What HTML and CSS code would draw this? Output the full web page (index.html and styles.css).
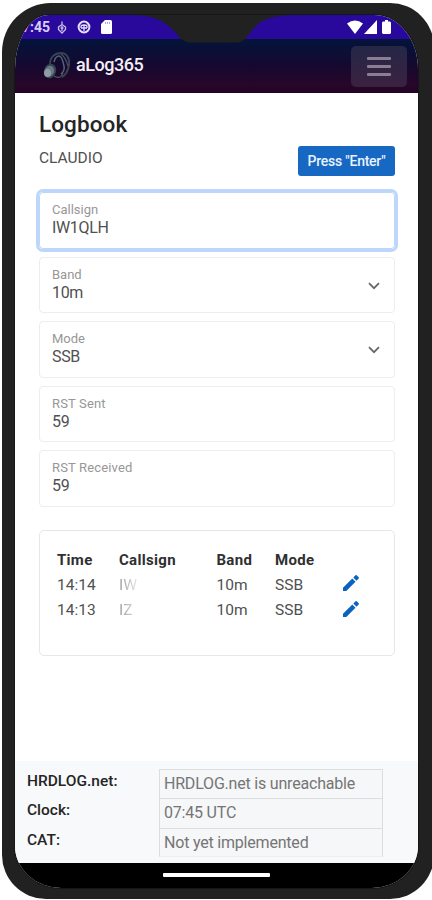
FILE: index.html
```html
<!DOCTYPE html>
<html lang="en">
<head>
<meta charset="utf-8">
<title>aLog365</title>
<link rel="stylesheet" href="styles.css">
</head>
<body>
<div class="phone">
  <div class="screen">
    <div class="status">
      <span class="time">7:45</span>
      <svg class="st-bug" width="10" height="13" viewBox="0 0 10 13"><path d="M5 .5v3M1.500 6L5 3.500 8.500 6v2.500L5 12 1.500 8.500zM3.500 7h3M5 5v5" fill="none" stroke="#c9c0f0" stroke-width="1.300"/></svg>
      <svg class="st-circle" width="14" height="14" viewBox="0 0 14 14"><circle cx="7" cy="7" r="5.400" fill="none" stroke="#e6e0fa" stroke-width="2"/><path d="M4 8V6.500q0-1.500 3-1.500t3 1.500V8M7 5.500V11M4 8h6" fill="none" stroke="#e6e0fa" stroke-width="1.300"/></svg>
      <svg class="st-sd" width="11" height="14" viewBox="0 0 11 14"><path d="M4 0h5.500Q11 0 11 1.500v11Q11 14 9.500 14h-8Q0 14 0 12.500V4z" fill="#fff"/><path d="M4.500 2v2M6.500 2v2M8.500 2v2" stroke="#9a8add" stroke-width=".8"/></svg>
      <span class="signals">
        <svg width="16" height="14" viewBox="0 0 16 14"><path d="M0 3.500Q8-2.500 16 3.500L8 14z" fill="#fff"/></svg>
        <svg width="13" height="14" viewBox="0 0 13 14"><path d="M13 0v14H0z" fill="#fff"/></svg>
        <svg class="battery" width="9" height="14" viewBox="0 0 9 14"><path d="M3 0h3v1.500h2l1 1V13l-1 1H1l-1-1V2.500l1-1h2z" fill="#fff"/></svg>
      </span>
      <svg class="notch" width="166" height="28" viewBox="0 0 166 28"><path d="M0 0C18 0 31 4 41 14C48 21 51 27 59 27.500H105C113 27 115 23 122 14C130 4 142 0 166 0z" fill="#212121"/></svg>
    </div>
    <header class="bar">
      <svg class="logo" width="28" height="28" viewBox="0 0 28 28">
        <g fill="none"><path d="M8 12C8 5 13 1 19 1s9 6 8 12-4 11-7 12" stroke="#354252" stroke-width="2"/><path d="M12 10C13 6 15 4 17 4s4 5 5 10-1 6-3 8" stroke="#566372" stroke-width="1.500"/><path d="M12 24q7 4 9-3M19 2q5 4 7 12" stroke="#465363" stroke-width="1.300"/></g>
        <ellipse cx="8" cy="19" rx="6" ry="7.500" transform="rotate(20 8 19)" fill="#354353"/><ellipse cx="7.500" cy="19" rx="4.500" ry="5.500" transform="rotate(20 7 19)" fill="#687884"/><ellipse cx="5.500" cy="21" rx="3.500" ry="4" fill="#8e9da3"/>
      </svg>
      <span class="brand">aLog365</span>
      <button class="menu" aria-label="Menu"><i></i><i></i><i></i></button>
    </header>
    <main>
      <h1>Logbook</h1>
      <div class="who"><span>CLAUDIO</span><button class="enter">Press "Enter"</button></div>
      <div class="fields">
        <div class="field focus"><label>Callsign</label><b>IW1QLH</b></div>
        <div class="field"><label>Band</label><b>10m</b><svg class="chev" width="12" height="8" viewBox="0 0 12 8"><path d="M1 1.200l5 5 5-5" fill="none" stroke="#666" stroke-width="1.700"/></svg></div>
        <div class="field"><label>Mode</label><b>SSB</b><svg class="chev" width="12" height="8" viewBox="0 0 12 8"><path d="M1 1.200l5 5 5-5" fill="none" stroke="#666" stroke-width="1.700"/></svg></div>
        <div class="field"><label class="wide">RST Sent</label><b>59</b></div>
        <div class="field"><label class="wide">RST Received</label><b>59</b></div>
      </div>
      <div class="log">
        <div class="row head"><span>Time</span><span>Callsign</span><span>Band</span><span>Mode</span></div>
        <div class="row"><span>14:14</span><span class="faded">IW</span><span>10m</span><span>SSB</span><svg width="16" height="16" viewBox="0 0 16 16"><path d="M0 12.700L9.300 3.500l3.200 3.200L3.300 16H0zM10.300 2.500L12.500.3q.6-.5 1.200 0l2 2q.5.600 0 1.200l-2.200 2.200z" fill="#0b63c1"/></svg></div>
        <div class="row"><span>14:13</span><span class="faded">IZ</span><span>10m</span><span>SSB</span><svg width="16" height="16" viewBox="0 0 16 16"><path d="M0 12.700L9.300 3.500l3.200 3.200L3.300 16H0zM10.300 2.500L12.500.3q.6-.5 1.200 0l2 2q.5.600 0 1.200l-2.200 2.200z" fill="#0b63c1"/></svg></div>
      </div>
    </main>
    <footer>
      <div class="info"><strong>HRDLOG.net:</strong><span>HRDLOG.net is unreachable</span></div>
      <div class="info"><strong>Clock:</strong><span>07:45 UTC</span></div>
      <div class="info"><strong>CAT:</strong><span>Not yet implemented</span></div>
    </footer>
    <div class="nav"><i></i></div>
  </div>
</div>
</body>
</html>
```
FILE: styles.css
```css
* { box-sizing: border-box; }
body { margin: 0; width: 432px; height: 900px; overflow: hidden; background: #fff; font-family: Roboto, sans-serif; color: #505050; }
svg { display: block; flex: none; }
button { border: 0; font-family: inherit; }
.phone { width: 432px; height: 896px; margin: 3px 0 0 2px; padding: 12px 14px 11px 13px; background: #212121; border-radius: 49px 44px 44px 44px; }
.screen { width: 403px; height: 873px; display: flex; flex-direction: column; overflow: hidden; background: #fff; border-radius: 34px 44px 46px 46px / 54px 54px 42px 42px; box-shadow: 0 0 0 1px #161616; }
.status { position: relative; height: 24px; flex: none; display: flex; align-items: center; background: #29099c; }
.time { margin-left: 3px; width: 32px; font-size: 14px; font-weight: 700; color: #d8d0f8; text-align: right; }
.st-bug { margin-left: 7px; }
.st-circle { margin-left: 10px; }
.st-sd { margin-left: 10px; }
.signals { margin-left: auto; margin-right: 27px; display: flex; gap: 1px; }
.battery { margin-left: 4px; }
.notch { position: absolute; left: 116px; top: 0; z-index: 2; }
.bar { height: 54px; flex: none; padding: 0 11px 0 27px; display: flex; align-items: center; background: linear-gradient(#03143b, #16082f 50%, #270629 85%, #240424); }
.brand { margin: -2px 0 0 6px; font-size: 18px; font-weight: 500; letter-spacing: -.45px; line-height: 20px; color: #f2eff5; }
.menu { width: 56px; height: 41px; margin-left: auto; padding: 0 16px; display: flex; flex-direction: column; justify-content: center; gap: 5px; border-radius: 5px; background: linear-gradient(#252747, #3b2140); }
.menu i { height: 3px; background: #8b7d94; border-radius: 1px; }
main { height: 668px; flex: none; padding: 18px 23px 0 24px; }
h1 { margin: 0; font-size: 22.500px; line-height: 26px; font-weight: 500; letter-spacing: .1px; color: #252525; }
.who { height: 30px; margin-top: 9px; display: flex; justify-content: space-between; font-size: 15.500px; line-height: 24px; }
.enter { width: 97px; height: 30px; padding: 0; border-radius: 3px; background: #1768c3; color: #e9f3ff; font-size: 14px; font-weight: 500; letter-spacing: -.25px; }
.fields { display: flex; flex-direction: column; gap: 8px; margin-top: 16px; }
.field { position: relative; height: 56.500px; padding: 9px 12px; border: 1px solid #ededee; border-radius: 4px; display: flex; flex-direction: column; }
.field.focus { border-color: #bdd7fc; box-shadow: 0 0 0 3px #bdd7fc; }
.field label { font-size: 13px; line-height: 15px; color: #979797; }
.field label.wide { letter-spacing: .15px; }
.field b { margin-top: 1px; font-size: 16px; line-height: 20px; font-weight: 400; letter-spacing: -.35px; }
.chev { position: absolute; right: 14px; top: 24px; }
.log { height: 126px; margin-top: 23.500px; padding: 16px 17px; border: 1px solid #e7e7e8; border-radius: 5px; }
.row { display: grid; grid-template-columns: 62px 97.500px 58.500px 68px 16px; height: 25.300px; align-items: center; font-size: 15.500px; letter-spacing: 0; }
.row svg { margin-top: -3px; }
.head { font-weight: 700; font-size: 15px; letter-spacing: .3px; color: #303030; }
.faded { width: 20px; color: transparent; background: linear-gradient(90deg, #999, #eee); background-clip: text; -webkit-background-clip: text; }
footer { height: 102px; flex: none; padding: 8px 35px 0 12px; background: #f8f9fa; }
.info { height: 29.300px; display: flex; }
.info strong { width: 132px; flex: none; font-size: 15.500px; line-height: 24px; font-weight: 500; color: #252525; }
.info span { flex: 1; padding-left: 4px; border: 1px solid #ddd; border-bottom-width: 0; font-size: 16px; letter-spacing: -.2px; line-height: 28px; color: #757575; background: #f6f7f8; }
.info:last-child span { border-bottom: 1px solid #eee; }
.nav { height: 25px; flex: none; background: #000; display: flex; justify-content: center; padding-top: 10px; }
.nav i { width: 107px; height: 4px; background: #fff; border-radius: 1px; }
```
